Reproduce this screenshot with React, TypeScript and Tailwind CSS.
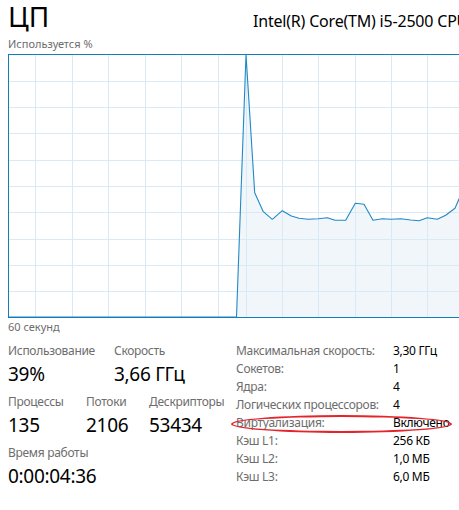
import React from "react";

const hLines = [81, 107, 133, 160, 186, 212, 239, 265, 291];
const vLines = [35, 72, 108, 145, 181, 218, 246, 282, 318, 355, 391, 427];

// points in page coordinates, shifted into the chart box below
const usage: [number, number][] = [
  [8, 317], [236.5, 317], [246, 54.5], [254.7, 192.7], [263.3, 211.7], [272.3, 219.3],
  [282.3, 210.7], [291.3, 216], [299, 218.3], [308, 219.3], [318.3, 218.7], [327.3, 217.7],
  [335, 220.3], [345.7, 220.3], [355.3, 203.3], [364, 204.3], [373, 220.3], [382.3, 218.7],
  [391.3, 219.3], [400.7, 218.7], [410.7, 220], [419, 220.7], [427.3, 217.7], [437.3, 219.3],
  [445.7, 215.3], [455, 208.3], [459, 199], [463, 189],
];

const CpuChart = () => {
  const pts = usage.map(([x, y]) => `${x - 8},${y - 54}`).join(" ");
  const area = `${pts} 455,263.5 0,263.5`;
  return (
    <svg width="451" height="264" className="block">
      <polygon points={area} fill="#f1f6fa" />
      {hLines.map((y) => (
        <line key={y} x1="0" x2="460" y1={y - 54 + 0.5} y2={y - 54 + 0.5} stroke="#d9eaf4" strokeWidth="1" />
      ))}
      {vLines.map((x) => (
        <line key={x} x1={x - 8 + 0.5} x2={x - 8 + 0.5} y1="0" y2="264" stroke="#d9eaf4" strokeWidth="1" />
      ))}
      <polyline points={pts} fill="none" stroke="#2288c6" strokeWidth="1.1" strokeLinejoin="round" />
      <line x1="0.5" x2="0.5" y1="0" y2="264" stroke="#117dbb" strokeWidth="1" />
      <line x1="0" x2="460" y1="0.5" y2="0.5" stroke="#117dbb" strokeWidth="1" />
      <line x1="0" x2="460" y1="263.5" y2="263.5" stroke="#117dbb" strokeWidth="1" />
    </svg>
  );
};

const Stat = ({ label, value, w }: { label: string; value: string; w: string }) => (
  <div className={w}>
    <div className="text-[12px] leading-[18px] tracking-[-0.3px] text-[#6d6d6d] whitespace-nowrap">{label}</div>
    <div className="text-[19px] leading-[28px] tracking-[-0.3px] text-black whitespace-nowrap">{value}</div>
  </div>
);

const specs = [
  ["Максимальная скорость:", "3,30 ГГц"],
  ["Сокетов:", "1"],
  ["Ядра:", "4"],
  ["Логических процессоров:", "4"],
  ["Виртуализация:", "Включено"],
  ["Кэш L1:", "256 КБ"],
  ["Кэш L2:", "1,0 МБ"],
  ["Кэш L3:", "6,0 МБ"],
];

export default function App() {
  return (
    <div className="w-[459px] h-[510px] overflow-hidden bg-white font-['Segoe_UI','Noto_Sans',sans-serif]">
      <div className="h-[36px] flex items-baseline">
        <div className="w-[253px] shrink-0 pl-2 text-[28px] leading-[32px] text-black">ЦП</div>
        <div className="text-[16px] leading-[20px] tracking-[-0.2px] text-black whitespace-nowrap">
          Intel(R) Core(TM) i5-2500 CPU @ 3.30GHz
        </div>
      </div>
      <div className="pl-2 text-[11px] leading-[16px] text-[#6d6d6d]">Используется %</div>
      <div className="pl-2 mt-[2px]">
        <CpuChart />
      </div>
      <div className="pl-2 mt-[1px] text-[11px] leading-[16px] text-[#6d6d6d]">60 секунд</div>

      <div className="mt-[7px] flex">
        <div className="w-[236px] shrink-0 pl-2 flex flex-col gap-[5px]">
          <div className="flex">
            <Stat label="Использование" value="39%" w="w-[106px]" />
            <Stat label="Скорость" value="3,66 ГГц" w="w-[110px]" />
          </div>
          <div className="flex">
            <Stat label="Процессы" value="135" w="w-[78px]" />
            <Stat label="Потоки" value="2106" w="w-[63px]" />
            <Stat label="Дескрипторы" value="53434" w="w-[80px]" />
          </div>
          <Stat label="Время работы" value="0:00:04:36" w="w-[200px]" />
        </div>

        <div className="relative flex-1">
          {specs.map(([k, v]) => (
            <div key={k} className="flex h-[18px] items-center text-[12px] tracking-[-0.3px] whitespace-nowrap">
              <span className="w-[157px] shrink-0 text-[#6d6d6d]">{k}</span>
              <span className="text-black">{v}</span>
            </div>
          ))}
          <div className="absolute left-[-5px] top-[73px] w-[221px] h-[18px] rounded-[50%] border-2 border-[#e3242b]" />
        </div>
      </div>
    </div>
  );
}
